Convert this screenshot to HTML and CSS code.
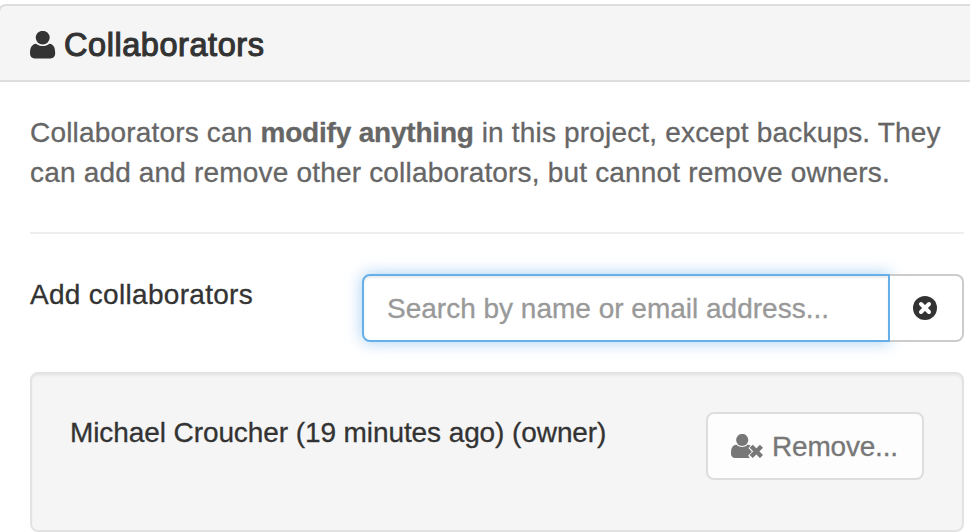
FILE: index.html
```html
<!DOCTYPE html>
<html lang="en">
<head>
<meta charset="utf-8">
<title>Collaborators</title>
<link rel="stylesheet" href="styles.css">
</head>
<body>
<section class="panel">
  <header class="panel-heading">
    <svg class="user-icon" viewBox="0 0 26 28"><ellipse cx="12.700" cy="6.600" rx="7" ry="6.800"/><path d="M6 12.700c4 3.100 9.500 3.100 13.500 0 4.300.6 5.700 4.200 5.700 9.600 0 3.200-1.700 5.200-4.600 5.200H4.600C1.700 27.500 0 25.500 0 22.300c0-5.400 1.600-9 6-9.600Z"/></svg>
    <h1>Collaborators</h1>
  </header>
  <div class="panel-body">
    <p class="intro">Collaborators can <b>modify anything</b> in this project, except backups. They can add and remove other collaborators, but cannot remove owners.</p>
    <hr>
    <div class="form-row">
      <label for="search">Add collaborators</label>
      <div class="input-group">
        <input id="search" type="text" placeholder="Search by name or email address...">
        <button class="clear" type="button" aria-label="Clear"><svg viewBox="0 0 24 24"><circle cx="12" cy="12" r="12"/><path class="cross" d="m8 8 8 8m0-8-8 8"/></svg></button>
      </div>
    </div>
    <div class="well">
      <span class="member">Michael Croucher (19 minutes ago) (owner)</span>
      <button class="remove" type="button"><svg viewBox="0 0 32 24"><circle cx="11.200" cy="6" r="6.100"/><path d="M5.500 10.800c3.200 2.900 8 2.900 11.200 0 1.300.1 2.300.4 3 1L17.400 14l3.500 3.700-3.700 3.700 1.500 2.600H4.200C1.700 24 0 22.300 0 19.500c0-5 1.200-8.300 5.500-8.700Z"/><path class="x" d="m20.200 12.200 10.300 10.300m0-10.300L20.200 22.500"/></svg><span class="remove-text">Remove...</span></button>
    </div>
  </div>
</section>
</body>
</html>
```
FILE: styles.css
```css
* { box-sizing: border-box; }
body { margin: 0; overflow: hidden; background: #fff; color: #333; font: 28px/40px "Liberation Sans", Arial, sans-serif; -webkit-text-stroke: .3px; }
button, input { font: inherit; }
svg { display: block; fill: currentColor; flex: none; }
.panel { height: 532px; padding-top: 4px; }
.panel-heading { height: 78px; display: flex; align-items: center; gap: 8px; margin-left: -2px; padding: 2px 30px 0 32px; background: #f5f5f5; border-top: 2px solid #ddd; border-left: 2px solid #ddd; border-bottom: 2px solid #ddd; border-top-left-radius: 8px; padding-left: 30px; }
.user-icon { width: 26px; height: 28px; margin-top: 1px; }
h1 { margin: 0; padding-top: 1px; font-size: 32.5px; line-height: 36px; font-weight: 400; -webkit-text-stroke: 1.1px; letter-spacing: .55px; }
.panel-body { padding: 31px 6px 0 30px; }
.intro { width: 930px; margin: 0; color: #666; letter-spacing: .18px; }
.intro b { letter-spacing: -.2px; }
hr { height: 2px; margin: 39px 0 40px; border: 0; background: #eee; }
.form-row { display: flex; justify-content: space-between; }
label { padding-top: 1px; letter-spacing: .3px; }
.input-group { display: flex; width: 602px; height: 68px; }
input { width: 528px; padding: 2px 23px 0; border: 2px solid #66afe9; border-radius: 8px 0 0 8px; outline: 0; box-shadow: inset 0 2px 2px rgba(0,0,0,.075), 0 0 16px rgba(102,175,233,.6); }
input::placeholder { color: #999; opacity: 1; }
.clear { width: 74px; border: 2px solid #ccc; border-left: 0; border-radius: 0 8px 8px 0; background: #fff; color: #333; display: grid; place-items: center; padding: 0 2px 0 0; }
.clear svg { width: 24px; height: 24px; }
.cross { fill: none; stroke: #fff; stroke-width: 4; stroke-linecap: round; }
.well { display: flex; justify-content: space-between; align-items: flex-start; height: 160px; margin-top: 30px; padding: 38px; border: 2px solid #e3e3e3; border-radius: 8px; background: #f5f5f5; box-shadow: inset 0 2px 2px rgba(0,0,0,.05); }
.member { padding-top: 1px; letter-spacing: -.09px; }
.remove { display: flex; align-items: center; gap: 9px; width: 218px; height: 68px; padding: 0 23px; border: 2px solid #ddd; border-radius: 8px; background: #fdfdfd; color: #777; white-space: nowrap; }
.remove svg { width: 32px; height: 24px; }
.remove-text { padding-top: 2px; letter-spacing: -.2px; }
.x { fill: none; stroke: currentColor; stroke-width: 4.4; }
```
